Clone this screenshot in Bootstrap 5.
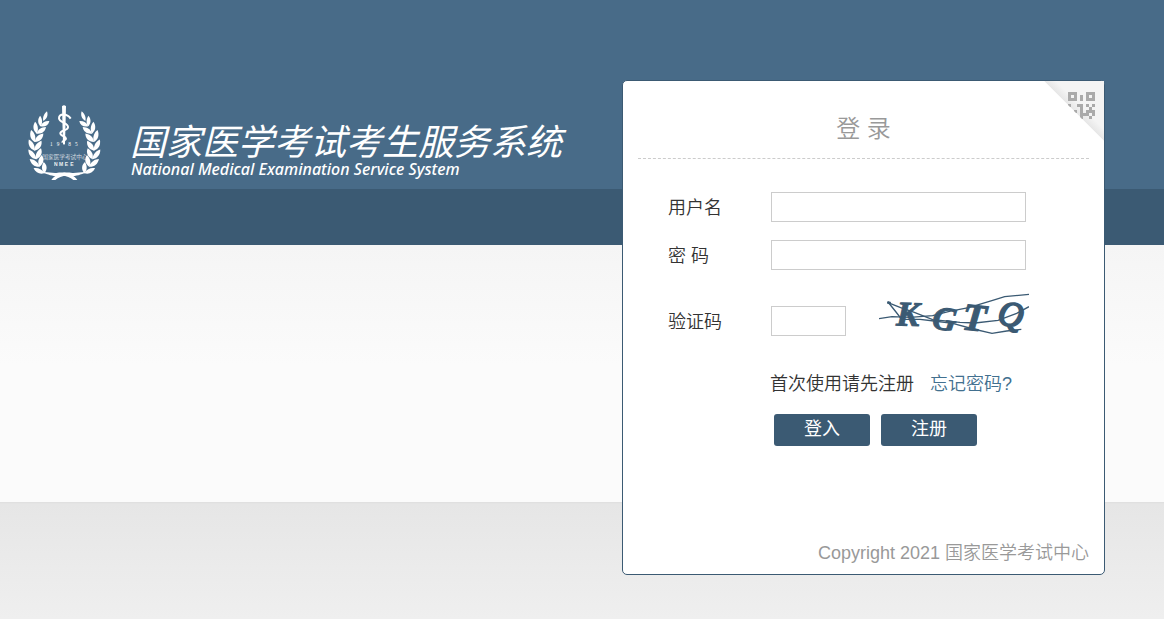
<!DOCTYPE html>
<html lang="zh-CN">
<head>
<meta charset="utf-8">
<meta name="viewport" content="width=device-width, initial-scale=1">
<title>国家医学考试考生服务系统</title>
<link href="https://cdn.jsdelivr.net/npm/bootstrap@5.3.0/dist/css/bootstrap.min.css" rel="stylesheet">
<style>
body {
  font-family: "Liberation Sans", "Noto Sans CJK SC", sans-serif;
  font-size: 18px;
  font-weight: 350;
  line-height: 27px;
  color: #333;
  background:
    linear-gradient(#486b88, #486b88) 0 0 / 100% 189px no-repeat,
    linear-gradient(#3b5a73, #3b5a73) 0 189px / 100% 56px no-repeat,
    linear-gradient(#f5f5f5, #fbfbfb 120px) 0 245px / 100% 257px no-repeat,
    linear-gradient(#dedede, #e6e6e6 2px, #efefef 117px) 0 502px / 100% 117px no-repeat,
    #efefef;
}
.page-wrap { padding: 80px 59px 24px 24px; }
.brand { margin-top: 24px; color: #fff; gap: 26px; }
.brand-title { font-family: "Noto Sans CJK SC", sans-serif; font-size: 36px; font-style: italic; font-weight: 400; line-height: 36px; margin: 17px 0 0; }
.brand-sub { font-family: "Noto Sans", sans-serif; font-size: 16px; font-style: italic; font-weight: 500; line-height: 18px; padding: 3px 0 0 1px; }
.login-card { width: 483px; min-height: 495px; border: 1px solid #3b5a73; border-radius: 5px; --bs-card-color: #333; }
.login-title { margin: 0 15px; padding: 30px 0 11px; font-size: 24px; font-weight: 350; line-height: 36px; color: #999; border-bottom: 1px dashed #ccc; }
.login-form { padding: 33px 45px 0; }
.field-row { margin-bottom: 18px; }
.field-label { width: 103px; padding-top: 2px; }
.field-input { width: 255px; height: 30px; padding: 2px 6px; border: 1px solid #ccc; border-radius: 0; }
.code-row { margin: 21px 0 20px; }
.code-input { width: 75px; margin-right: 33px; }
.form-rest { margin-left: 102px; }
.link-plain { color: #333; }
.link-forgot { color: #42708f; }
.btn-login { width: 96px; height: 32px; padding: 0 0 3px; line-height: 28px; font-size: 18px; font-weight: 400; border: 0; border-radius: 3px; color: #fff; background: #3b5a73; }
.btn-login:hover { color: #fff; background: #486b88; }
.button-row { gap: 11px; }
.copyright { color: #999; padding: 0 15px 7px; }
</style>
</head>
<body>
<div class="page-wrap d-flex flex-wrap justify-content-between align-items-start">
  <header class="brand d-flex">
    <svg width="80" height="80" viewBox="42 42 240 240" fill="#fff" aria-hidden="true">
      <defs>
        <g id="leafpair">
          <path d="M0 9C-14 4-21-8-18-24C-7-19 1-8 1 9Z"/>
          <path d="M0 9C-1-6 6-15 20-21C23-7 16 5 0 9Z"/>
        </g>
        <g id="branch">
          <path d="M100 93C97 83 102 71 111 64C115 75 111 87 100 93Z"/>
          <use href="#leafpair" transform="translate(95 102) rotate(26) scale(.85)"/>
          <use href="#leafpair" transform="translate(83 123) rotate(21) scale(.95)"/>
          <use href="#leafpair" transform="translate(76 147) rotate(12)"/>
          <use href="#leafpair" transform="translate(74 173) rotate(1)"/>
          <use href="#leafpair" transform="translate(77 199) rotate(-10)"/>
          <use href="#leafpair" transform="translate(85 222) rotate(-23)"/>
          <use href="#leafpair" transform="translate(98 243) rotate(-37) scale(.95)"/>
          <path d="M91 247C110 244 124 250 139 249C156 246 170 248 180 252C192 258 198 264 202 270L190 270C179 260 164 255 143 258C124 260 111 251 91 247Z"/>
        </g>
      </defs>
      <use href="#branch"/>
      <use href="#branch" transform="translate(326 0) scale(-1 1)"/>
      <path d="M156 49Q162 42 168 49L165 161L162 165L159 161Z"/>
      <path d="M182 86C171 69 147 70 147 85C147 98 176 98 174 112C172 123 151 120 151 130C151 139 168 138 168 146C168 151 156 151 157 158" fill="none" stroke="#fff" stroke-width="6"/>
      <g font-family="Liberation Serif, serif" font-size="16"><text x="120 140 175 195" y="169">1985</text></g>
      <text x="97" y="208" font-family="Noto Sans CJK SC, sans-serif" font-size="17" font-weight="350" opacity=".8">国家医学考试中心</text>
      <text x="132 147 164 181" y="229" font-family="Liberation Sans, sans-serif" font-size="15" font-weight="700" opacity=".9">NMEE</text>
    </svg>
    <div>
      <h1 class="brand-title">国家医学考试考生服务系统</h1>
      <div class="brand-sub">National Medical Examination Service System</div>
    </div>
  </header>

  <main class="login-card card">
    <a href="#" class="position-absolute top-0 end-0" aria-label="二维码登录">
      <svg class="d-block" width="60" height="60" viewBox="42 33 180 180">
        <defs>
          <linearGradient id="fold" gradientUnits="userSpaceOnUse" x1="132" y1="123" x2="150" y2="105">
            <stop offset="0" stop-color="#e6e6e6"/><stop offset="1" stop-color="#f4f4f4"/>
          </linearGradient>
          <clipPath id="tri"><path d="M42 33H222V213Z"/></clipPath>
        </defs>
        <g clip-path="url(#tri)">
          <path d="M42 33H222V213Z" fill="url(#fold)"/>
          <path fill="#aaa" fill-rule="evenodd" d="M114 66h27v27h-27zM123 75v9h9v-9zM168 66h27v27h-27zM177 75v9h9v-9zM150 75h9v18h-9zM114 102h9v9h-9zM141 102h18v18h-9v-9h-9zM168 102h9v9h-9zM186 102h9v9h-9zM132 120h9v9h-9zM177 111h9v9h-9zM168 120h9v9h-9zM186 120h9v18h-9v-9h-9v-9h9zM150 120h9v27h-9zM159 129h9v9h-9zM168 129h9v9h-9zM177 138h9v9h-9z"/>
        </g>
      </svg>
    </a>
    <h2 class="login-title text-center">登 录</h2>
    <form class="login-form">
      <div class="field-row d-flex align-items-center">
        <label class="field-label" for="user">用户名</label>
        <input class="field-input" id="user" type="text">
      </div>
      <div class="field-row d-flex align-items-center">
        <label class="field-label" for="pass">密 码</label>
        <input class="field-input" id="pass" type="password">
      </div>
      <div class="code-row d-flex align-items-center">
        <label class="field-label" for="code">验证码</label>
        <input class="field-input code-input" id="code" type="text">
        <svg width="150" height="60" viewBox="57 33 450 180" role="img" aria-label="验证码图片">
          <g fill="#3b5a73" stroke="#3b5a73" stroke-width="3" font-family="Liberation Serif, serif" font-style="italic" font-weight="700">
            <text font-size="104" transform="translate(108 136) rotate(2)">K</text>
            <text font-size="100" transform="translate(214 145) rotate(8)">G</text>
            <text font-size="116" transform="translate(304 148) rotate(6)">T</text>
            <text font-size="104" font-weight="400" stroke-width="6" transform="translate(410 132) rotate(8)">Q</text>
          </g>
          <g fill="none" stroke="#3b5a73" stroke-width="4">
            <path d="M57 116L96 110L150 112L218 107L268 94L326 83L398 61L434 50L507 43"/>
            <path d="M82 67L122 83L163 97L218 119L300 127L345 129L414 121L470 100L507 80"/>
            <path d="M84 66L108 96L125 118L180 118L222 123L278 130L340 147L396 160L440 153L484 148"/>
            <path d="M82 67L92 70" stroke-width="8"/>
          </g>
        </svg>
      </div>
      <div class="form-rest">
        <div class="d-flex mb-3">
          <a class="link-plain text-decoration-none me-3" href="#">首次使用请先注册</a>
          <a class="link-forgot text-decoration-none" href="#">忘记密码?</a>
        </div>
        <div class="button-row d-flex ms-1">
          <button class="btn btn-login" type="submit">登入</button>
          <button class="btn btn-login" type="button">注册</button>
        </div>
      </div>
    </form>
    <footer class="copyright text-end mt-auto">Copyright 2021 国家医学考试中心</footer>
  </main>
</div>
<script src="https://cdn.jsdelivr.net/npm/bootstrap@5.3.0/dist/js/bootstrap.bundle.min.js"></script>
</body>
</html>
